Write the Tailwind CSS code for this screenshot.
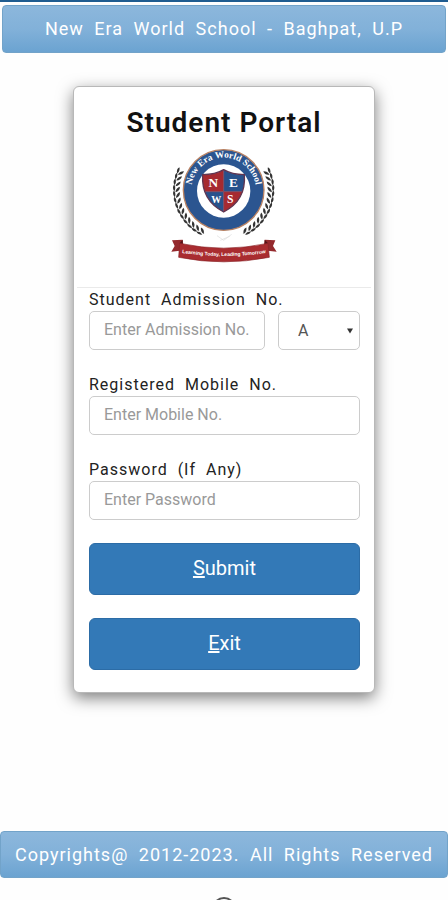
<!DOCTYPE html>
<html lang="en">
<head>
<meta charset="utf-8">
<meta name="viewport" content="width=device-width, initial-scale=1">
<title>Student Portal</title>
<script src="https://cdn.jsdelivr.net/npm/@tailwindcss/browser@4"></script>
</head>
<body class="flex h-screen flex-col overflow-hidden border-t-2 border-[#1f5c90] bg-[#fefefe] font-[Roboto,'Liberation_Sans',sans-serif] text-[#222]">
<header class="mx-[2px] mt-[3px] flex h-12 shrink-0 items-center justify-center rounded border border-[#72a3c9] bg-linear-to-b from-[#8cb7dc] via-[#82b1d9] to-[#6ba3d1] text-lg tracking-[1px] [word-spacing:5px] text-white">New Era World School - Baghpat, U.P</header>

<main class="mt-[33px] flex-1 px-4">
  <section class="mx-auto flex w-full max-w-[302px] flex-col rounded-md border border-[#b8b8b8] bg-white pb-[22px] shadow-[0_5px_16px_rgba(0,0,0,0.5)]">
    <h1 class="mt-[18px] text-center text-[28px] leading-9 font-semibold tracking-[1px] text-[#111]">Student Portal</h1>
    <svg class="mx-auto mt-[7px] h-[116px] w-[112px]" viewBox="23 24 336 348" role="img" aria-label="New Era World School crest">
      <defs>
        <path id="ring" d="M93 150A97 97 0 0 1 287 150"/>
        <path id="motto" d="M58 338Q190 358 324 338"/>
        <g id="leaf" fill="#333"><path d="M42 151q-8-11 0-20q6 10 0 20Z"/><path d="M45 154q2-12 14-16q0 13-14 16Z"/></g>
        <g id="branch">
          <path d="M52 92Q20 170 76 240Q99 267 133 280" fill="none" stroke="#777" stroke-width="1" opacity=".4"/>
          <use href="#leaf" transform="rotate(20 190 150)"/><use href="#leaf" transform="rotate(13 190 150)"/><use href="#leaf" transform="rotate(6 190 150)"/><use href="#leaf" transform="rotate(-1 190 150)"/><use href="#leaf" transform="rotate(-8 190 150)"/><use href="#leaf" transform="rotate(-15 190 150)"/><use href="#leaf" transform="rotate(-22 190 150)"/><use href="#leaf" transform="rotate(-29 190 150)"/><use href="#leaf" transform="rotate(-36 190 150)"/><use href="#leaf" transform="rotate(-43 190 150)"/><use href="#leaf" transform="rotate(-50 190 150)"/><use href="#leaf" transform="rotate(-57 190 150)"/><use href="#leaf" transform="rotate(-64 190 150)"/>
        </g>
        <clipPath id="shield"><path d="M127 104Q165 104 190 89Q215 104 252 104Q258 181 190 216Q122 181 127 104Z"/></clipPath>
      </defs>
      <use href="#branch"/>
      <use href="#branch" transform="matrix(-1 0 0 1 380 0)"/>
      <path d="M170 287l20 14 24-18M180 301l28-12" fill="none" stroke="#ddd" stroke-width="2"/>
      <circle cx="190" cy="150" r="121" fill="#2b5590" stroke="#b98262" stroke-width="4"/>
      <circle cx="190" cy="153" r="80" fill="#fff"/>
      <g clip-path="url(#shield)">
        <path d="M120 80h70v75h-70zM190 155h70v70h-70z" fill="#a62a30"/>
        <path d="M190 80h70v75h-70zM120 155h70v70h-70z" fill="#28528c"/>
        <path d="M190 80v140M120 155h140" stroke="#7d4a60" stroke-width="3"/>
      </g>
      <path d="M127 104Q165 104 190 89Q215 104 252 104Q258 181 190 216Q122 181 127 104Z" fill="none" stroke="#5f3551" stroke-width="4"/>
      <g fill="#fff" font-family="Liberation Serif, serif" font-weight="700" text-anchor="middle">
        <text x="159" y="140" font-size="40">N</text><text x="219" y="140" font-size="40">E</text>
        <text x="168" y="189" font-size="30">W</text><text x="210" y="189" font-size="35">S</text>
        <text font-size="28"><textPath href="#ring" startOffset="50%">New Era World School</textPath></text>
      </g>
      <path d="M35 301l32-2 4 32-38 4 10-17Z M345 301l-32-2-4 32 40 4-11-17Z" fill="#94292d"/>
      <path d="M67 299l-9 11 9 15ZM313 299l10 11-10 15Z" fill="#541519"/>
      <path d="M58 310Q190 339 323 310L327 352Q190 379 55 352Z" fill="#a92c30" stroke="#8a2227" stroke-width="2"/>
      <text font-family="Liberation Sans, sans-serif" font-weight="700" font-size="15" fill="#fff" text-anchor="middle"><textPath href="#motto" startOffset="50%">Learning Today, Leading Tomorrow</textPath></text>
    </svg>
    <hr class="mx-[3px] mt-[23px] border-[#eaeaea]">

    <form class="flex flex-col pr-[14px] pl-[15px]" onsubmit="return false">
      <div class="flex gap-[13px]">
        <div class="min-w-0 flex-1">
          <label for="admission" class="block h-[23px] text-base leading-[23px] tracking-[1px] whitespace-nowrap [word-spacing:5px]">Student Admission No.</label>
          <input id="admission" type="text" placeholder="Enter Admission No." class="block h-[39px] w-full rounded-[5px] border border-[#ccc] bg-white px-[14px] pb-[2px] text-base placeholder:text-[#999]">
        </div>
        <div class="relative mt-[23px] w-[82px]">
          <select aria-label="Section" class="block h-[39px] w-full appearance-none rounded-[5px] border border-[#ccc] bg-white pl-[19px] text-base text-[#555]"><option>A</option><option>B</option><option>C</option></select>
          <svg class="pointer-events-none absolute top-[17px] right-[7px] h-[6px] w-[6px]" viewBox="0 0 7 6" aria-hidden="true"><path d="M0 0h7L3.5 6Z" fill="#333"/></svg>
        </div>
      </div>
      <label for="mobile" class="mt-[23px] block h-[23px] text-base leading-[23px] tracking-[1px] [word-spacing:5px]">Registered Mobile No.</label>
      <input id="mobile" type="tel" placeholder="Enter Mobile No." class="block h-[39px] w-full rounded-[5px] border border-[#ccc] bg-white px-[14px] pb-[2px] text-base placeholder:text-[#999]">
      <label for="password" class="mt-[23px] block h-[23px] text-base leading-[23px] tracking-[1px] [word-spacing:5px]">Password (If Any)</label>
      <input id="password" type="password" placeholder="Enter Password" class="block h-[39px] w-full rounded-[5px] border border-[#ccc] bg-white px-[14px] pb-[2px] text-base placeholder:text-[#999]">
      <button type="submit" class="mt-[23px] h-[52px] rounded-md border border-[#2c6ca6] bg-[#3379b7] pb-[2px] text-xl text-white"><span class="underline">S</span>ubmit</button>
      <button type="button" class="mt-[23px] h-[52px] rounded-md border border-[#2c6ca6] bg-[#3379b7] pb-[2px] text-xl text-white"><span class="underline">E</span>xit</button>
    </form>
  </section>
</main>

<footer class="shrink-0">
  <p class="flex h-[47px] items-center justify-center rounded border border-[#72a3c9] bg-linear-to-b from-[#8cb7dc] via-[#82b1d9] to-[#6ba3d1] text-lg tracking-[1px] whitespace-nowrap [word-spacing:5px] text-white">Copyrights@ 2012-2023. All Rights Reserved</p>
  <div class="flex h-[22px] justify-center overflow-hidden pt-[19px]">
    <svg class="h-6 w-6 shrink-0" viewBox="0 0 24 24" aria-hidden="true"><circle cx="12" cy="12" r="11" fill="none" stroke="#555" stroke-width="2"/></svg>
  </div>
</footer>
</body>
</html>
